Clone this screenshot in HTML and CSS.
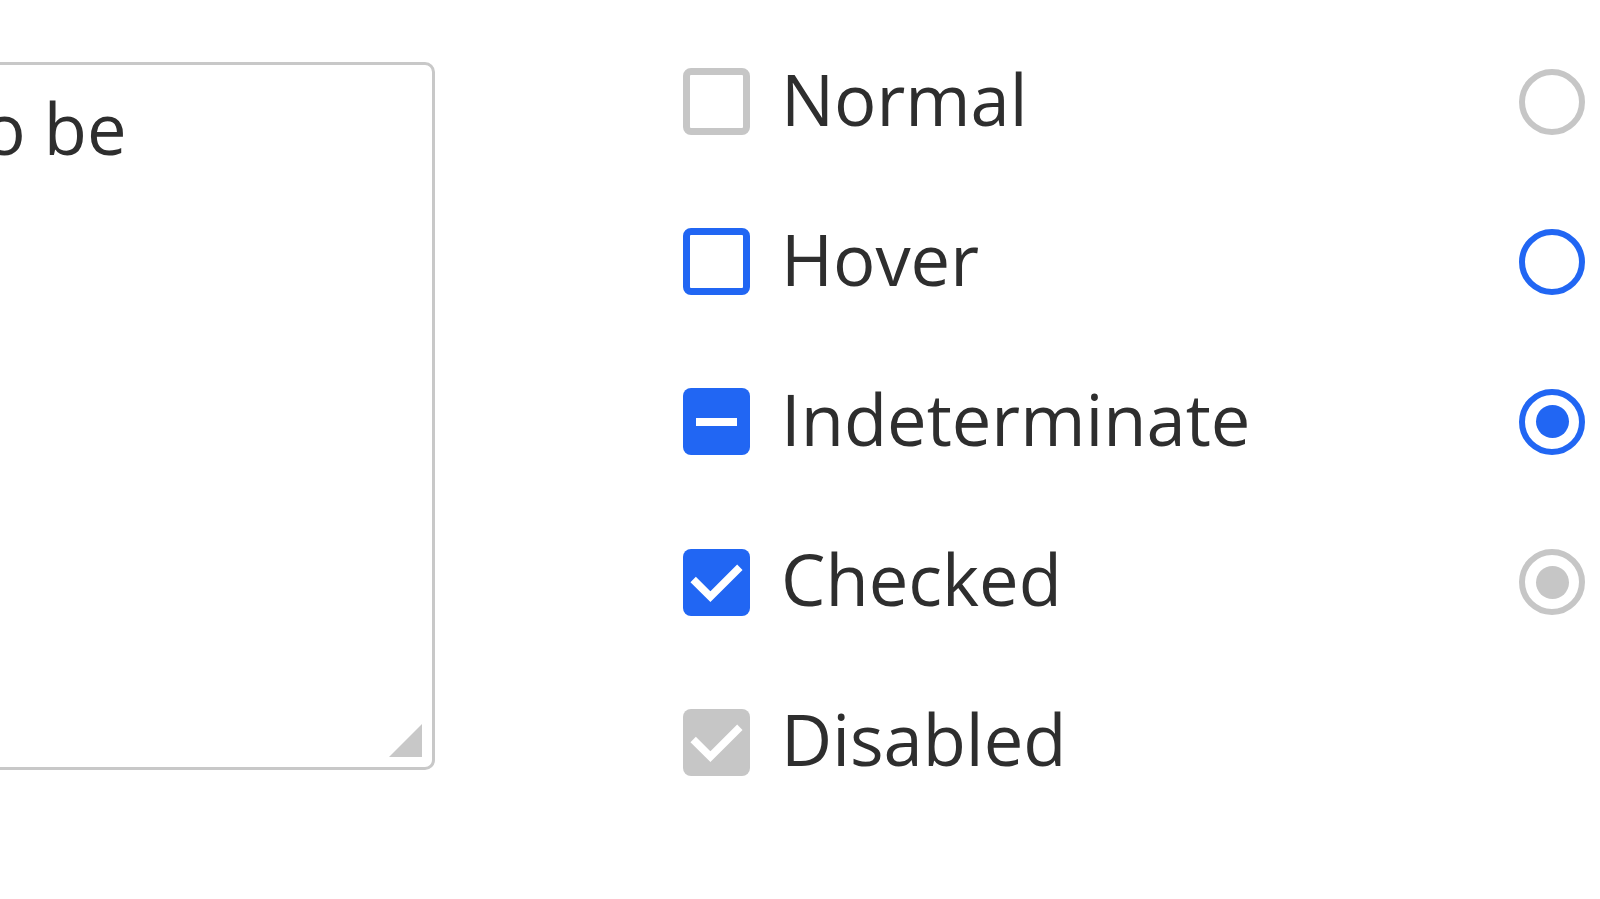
FILE: index.html
```html
<!DOCTYPE html>
<html lang="en">
<head>
<meta charset="utf-8">
<title>Form controls</title>
<link rel="stylesheet" href="styles.css">
</head>
<body>
<main class="page">
  <div class="textarea"><p class="textarea-text">to be</p></div>
  <div class="controls">
    <span class="checkbox"></span>
    <span class="label">Normal</span>
    <span class="radio"></span>

    <span class="checkbox checkbox--hover"></span>
    <span class="label">Hover</span>
    <span class="radio radio--hover"></span>

    <span class="checkbox checkbox--filled"><span class="dash"></span></span>
    <span class="label">Indeterminate</span>
    <span class="radio radio--checked"><span class="dot"></span></span>

    <span class="checkbox checkbox--filled"><svg class="tick" viewBox="0 0 66 66"><polyline points="10,30 27,47 56,18"/></svg></span>
    <span class="label">Checked</span>
    <span class="radio radio--disabled"><span class="dot"></span></span>

    <span class="checkbox checkbox--disabled"><svg class="tick" viewBox="0 0 66 66"><polyline points="10,30 27,47 56,18"/></svg></span>
    <span class="label">Disabled</span>
    <span class="radio-empty"></span>
  </div>
</main>
</body>
</html>
```

FILE: styles.css
```css
* { box-sizing: border-box; }
html, body {
  margin: 0;
  padding: 0;
  background: #ffffff;
  overflow: hidden;
}
body {
  width: 1600px;
  height: 899px;
  font-family: "Open Sans", "Noto Sans", sans-serif;
  color: #2e2e2e;
}
.page {
  display: flex;
  align-items: flex-start;
  padding-top: 62px;
}
.textarea {
  position: relative;
  flex: 0 0 auto;
  width: 535px;
  height: 708px;
  margin-left: -100px;
  border: 3px solid #c8c8c8;
  border-radius: 10px;
  padding: 14px 20px 0 55px;
  background: #fff;
}
.textarea::after {
  content: "";
  position: absolute;
  right: 10px;
  bottom: 10px;
  width: 33px;
  height: 33px;
  background: #c8c8c8;
  clip-path: polygon(100% 0, 100% 100%, 0 100%);
}
.textarea-text {
  margin: 0;
  font-size: 70.5px;
  line-height: 98px;
  white-space: nowrap;
}
.controls {
  display: grid;
  grid-template-columns: 67px 1fr 66px;
  grid-auto-rows: 67px;
  row-gap: 93.2px;
  align-items: center;
  margin-left: 248px;
  margin-top: 6px;
  width: 902px;
}
.checkbox {
  width: 67px;
  height: 67px;
  border: 7px solid #c6c6c6;
  border-radius: 8px;
  background: #fff;
  display: flex;
  align-items: center;
  justify-content: center;
}
.checkbox--hover { border-color: #2166f3; }
.checkbox--filled { border: 0; background: #2166f3; }
.checkbox--disabled { border: 0; background: #c6c6c6; }
.dash {
  width: 41px;
  height: 8px;
  background: #fff;
}
.tick {
  width: 67px;
  height: 67px;
  display: block;
}
.tick polyline {
  fill: none;
  stroke: #fff;
  stroke-width: 7.5;
  stroke-linecap: butt;
  stroke-linejoin: miter;
}
.label {
  font-size: 70.5px;
  line-height: 66px;
  padding-left: 31px;
  padding-bottom: 6px;
  white-space: nowrap;
}
.radio {
  width: 66px;
  height: 66px;
  border: 6px solid #c6c6c6;
  border-radius: 50%;
  display: flex;
  align-items: center;
  justify-content: center;
}
.radio--hover { border-color: #2166f3; }
.radio--checked { border-color: #2166f3; }
.radio--checked .dot { background: #2166f3; }
.radio--disabled .dot { background: #c6c6c6; }
.dot {
  width: 33px;
  height: 33px;
  border-radius: 50%;
}
.radio-empty { width: 66px; height: 66px; }
```
